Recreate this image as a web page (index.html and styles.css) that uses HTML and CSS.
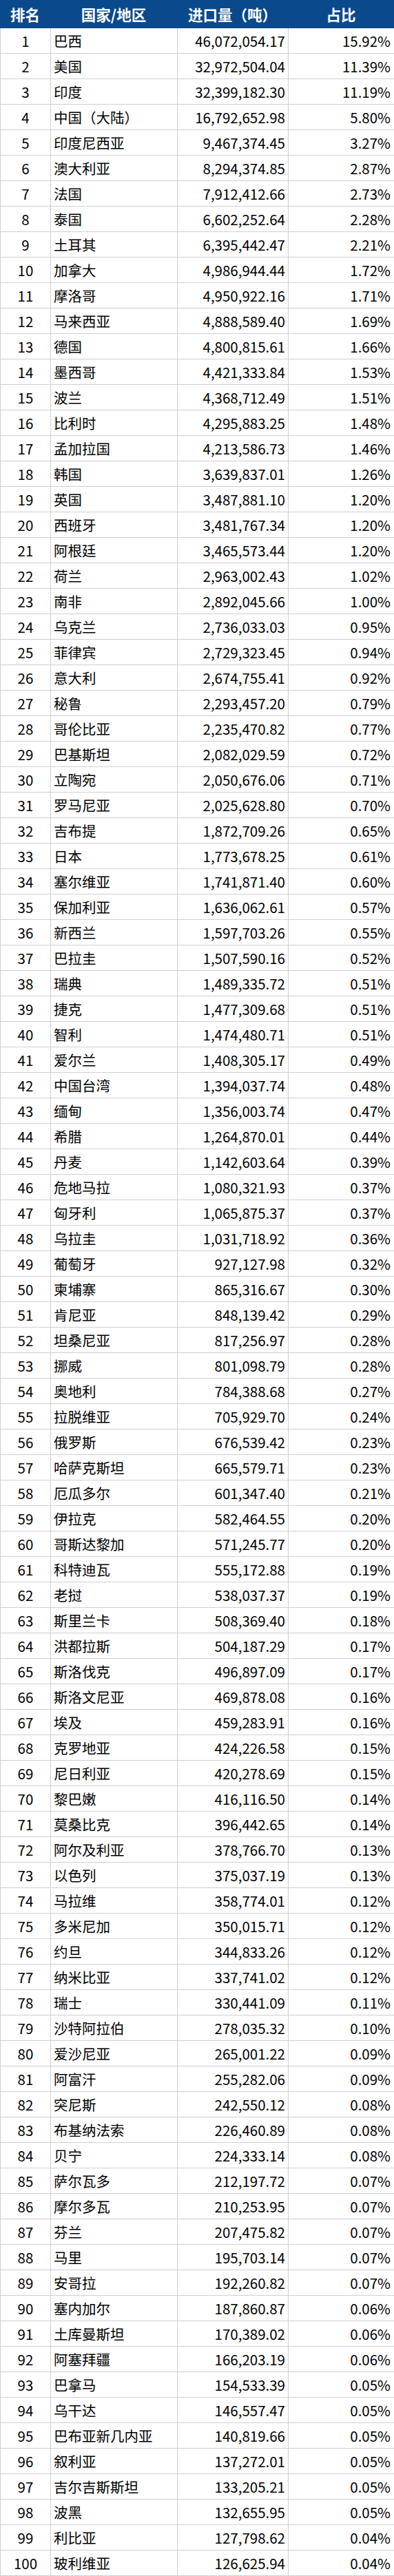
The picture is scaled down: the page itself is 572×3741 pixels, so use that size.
FILE: index.html
```html
<!DOCTYPE html>
<html lang="zh-CN">
<head>
<meta charset="utf-8">
<title>进口量排名</title>
<link rel="stylesheet" href="styles.css">
</head>
<body>
<div class="table" role="table">
  <div class="row head" role="row">
    <div class="cell c-rank" role="columnheader">排名</div>
    <div class="cell c-name" role="columnheader">国家/地区</div>
    <div class="cell c-qty" role="columnheader">进口量（吨）</div>
    <div class="cell c-pct" role="columnheader">占比</div>
  </div>
  <div class="row"><div class="cell c-rank">1</div><div class="cell c-name">巴西</div><div class="cell c-qty">46,072,054.17</div><div class="cell c-pct">15.92%</div></div>
  <div class="row"><div class="cell c-rank">2</div><div class="cell c-name">美国</div><div class="cell c-qty">32,972,504.04</div><div class="cell c-pct">11.39%</div></div>
  <div class="row"><div class="cell c-rank">3</div><div class="cell c-name">印度</div><div class="cell c-qty">32,399,182.30</div><div class="cell c-pct">11.19%</div></div>
  <div class="row"><div class="cell c-rank">4</div><div class="cell c-name">中国（大陆）</div><div class="cell c-qty">16,792,652.98</div><div class="cell c-pct">5.80%</div></div>
  <div class="row"><div class="cell c-rank">5</div><div class="cell c-name">印度尼西亚</div><div class="cell c-qty">9,467,374.45</div><div class="cell c-pct">3.27%</div></div>
  <div class="row"><div class="cell c-rank">6</div><div class="cell c-name">澳大利亚</div><div class="cell c-qty">8,294,374.85</div><div class="cell c-pct">2.87%</div></div>
  <div class="row"><div class="cell c-rank">7</div><div class="cell c-name">法国</div><div class="cell c-qty">7,912,412.66</div><div class="cell c-pct">2.73%</div></div>
  <div class="row"><div class="cell c-rank">8</div><div class="cell c-name">泰国</div><div class="cell c-qty">6,602,252.64</div><div class="cell c-pct">2.28%</div></div>
  <div class="row"><div class="cell c-rank">9</div><div class="cell c-name">土耳其</div><div class="cell c-qty">6,395,442.47</div><div class="cell c-pct">2.21%</div></div>
  <div class="row"><div class="cell c-rank">10</div><div class="cell c-name">加拿大</div><div class="cell c-qty">4,986,944.44</div><div class="cell c-pct">1.72%</div></div>
  <div class="row"><div class="cell c-rank">11</div><div class="cell c-name">摩洛哥</div><div class="cell c-qty">4,950,922.16</div><div class="cell c-pct">1.71%</div></div>
  <div class="row"><div class="cell c-rank">12</div><div class="cell c-name">马来西亚</div><div class="cell c-qty">4,888,589.40</div><div class="cell c-pct">1.69%</div></div>
  <div class="row"><div class="cell c-rank">13</div><div class="cell c-name">德国</div><div class="cell c-qty">4,800,815.61</div><div class="cell c-pct">1.66%</div></div>
  <div class="row"><div class="cell c-rank">14</div><div class="cell c-name">墨西哥</div><div class="cell c-qty">4,421,333.84</div><div class="cell c-pct">1.53%</div></div>
  <div class="row"><div class="cell c-rank">15</div><div class="cell c-name">波兰</div><div class="cell c-qty">4,368,712.49</div><div class="cell c-pct">1.51%</div></div>
  <div class="row"><div class="cell c-rank">16</div><div class="cell c-name">比利时</div><div class="cell c-qty">4,295,883.25</div><div class="cell c-pct">1.48%</div></div>
  <div class="row"><div class="cell c-rank">17</div><div class="cell c-name">孟加拉国</div><div class="cell c-qty">4,213,586.73</div><div class="cell c-pct">1.46%</div></div>
  <div class="row"><div class="cell c-rank">18</div><div class="cell c-name">韩国</div><div class="cell c-qty">3,639,837.01</div><div class="cell c-pct">1.26%</div></div>
  <div class="row"><div class="cell c-rank">19</div><div class="cell c-name">英国</div><div class="cell c-qty">3,487,881.10</div><div class="cell c-pct">1.20%</div></div>
  <div class="row"><div class="cell c-rank">20</div><div class="cell c-name">西班牙</div><div class="cell c-qty">3,481,767.34</div><div class="cell c-pct">1.20%</div></div>
  <div class="row"><div class="cell c-rank">21</div><div class="cell c-name">阿根廷</div><div class="cell c-qty">3,465,573.44</div><div class="cell c-pct">1.20%</div></div>
  <div class="row"><div class="cell c-rank">22</div><div class="cell c-name">荷兰</div><div class="cell c-qty">2,963,002.43</div><div class="cell c-pct">1.02%</div></div>
  <div class="row"><div class="cell c-rank">23</div><div class="cell c-name">南非</div><div class="cell c-qty">2,892,045.66</div><div class="cell c-pct">1.00%</div></div>
  <div class="row"><div class="cell c-rank">24</div><div class="cell c-name">乌克兰</div><div class="cell c-qty">2,736,033.03</div><div class="cell c-pct">0.95%</div></div>
  <div class="row"><div class="cell c-rank">25</div><div class="cell c-name">菲律宾</div><div class="cell c-qty">2,729,323.45</div><div class="cell c-pct">0.94%</div></div>
  <div class="row"><div class="cell c-rank">26</div><div class="cell c-name">意大利</div><div class="cell c-qty">2,674,755.41</div><div class="cell c-pct">0.92%</div></div>
  <div class="row"><div class="cell c-rank">27</div><div class="cell c-name">秘鲁</div><div class="cell c-qty">2,293,457.20</div><div class="cell c-pct">0.79%</div></div>
  <div class="row"><div class="cell c-rank">28</div><div class="cell c-name">哥伦比亚</div><div class="cell c-qty">2,235,470.82</div><div class="cell c-pct">0.77%</div></div>
  <div class="row"><div class="cell c-rank">29</div><div class="cell c-name">巴基斯坦</div><div class="cell c-qty">2,082,029.59</div><div class="cell c-pct">0.72%</div></div>
  <div class="row"><div class="cell c-rank">30</div><div class="cell c-name">立陶宛</div><div class="cell c-qty">2,050,676.06</div><div class="cell c-pct">0.71%</div></div>
  <div class="row"><div class="cell c-rank">31</div><div class="cell c-name">罗马尼亚</div><div class="cell c-qty">2,025,628.80</div><div class="cell c-pct">0.70%</div></div>
  <div class="row"><div class="cell c-rank">32</div><div class="cell c-name">吉布提</div><div class="cell c-qty">1,872,709.26</div><div class="cell c-pct">0.65%</div></div>
  <div class="row"><div class="cell c-rank">33</div><div class="cell c-name">日本</div><div class="cell c-qty">1,773,678.25</div><div class="cell c-pct">0.61%</div></div>
  <div class="row"><div class="cell c-rank">34</div><div class="cell c-name">塞尔维亚</div><div class="cell c-qty">1,741,871.40</div><div class="cell c-pct">0.60%</div></div>
  <div class="row"><div class="cell c-rank">35</div><div class="cell c-name">保加利亚</div><div class="cell c-qty">1,636,062.61</div><div class="cell c-pct">0.57%</div></div>
  <div class="row"><div class="cell c-rank">36</div><div class="cell c-name">新西兰</div><div class="cell c-qty">1,597,703.26</div><div class="cell c-pct">0.55%</div></div>
  <div class="row"><div class="cell c-rank">37</div><div class="cell c-name">巴拉圭</div><div class="cell c-qty">1,507,590.16</div><div class="cell c-pct">0.52%</div></div>
  <div class="row"><div class="cell c-rank">38</div><div class="cell c-name">瑞典</div><div class="cell c-qty">1,489,335.72</div><div class="cell c-pct">0.51%</div></div>
  <div class="row"><div class="cell c-rank">39</div><div class="cell c-name">捷克</div><div class="cell c-qty">1,477,309.68</div><div class="cell c-pct">0.51%</div></div>
  <div class="row"><div class="cell c-rank">40</div><div class="cell c-name">智利</div><div class="cell c-qty">1,474,480.71</div><div class="cell c-pct">0.51%</div></div>
  <div class="row"><div class="cell c-rank">41</div><div class="cell c-name">爱尔兰</div><div class="cell c-qty">1,408,305.17</div><div class="cell c-pct">0.49%</div></div>
  <div class="row"><div class="cell c-rank">42</div><div class="cell c-name">中国台湾</div><div class="cell c-qty">1,394,037.74</div><div class="cell c-pct">0.48%</div></div>
  <div class="row"><div class="cell c-rank">43</div><div class="cell c-name">缅甸</div><div class="cell c-qty">1,356,003.74</div><div class="cell c-pct">0.47%</div></div>
  <div class="row"><div class="cell c-rank">44</div><div class="cell c-name">希腊</div><div class="cell c-qty">1,264,870.01</div><div class="cell c-pct">0.44%</div></div>
  <div class="row"><div class="cell c-rank">45</div><div class="cell c-name">丹麦</div><div class="cell c-qty">1,142,603.64</div><div class="cell c-pct">0.39%</div></div>
  <div class="row"><div class="cell c-rank">46</div><div class="cell c-name">危地马拉</div><div class="cell c-qty">1,080,321.93</div><div class="cell c-pct">0.37%</div></div>
  <div class="row"><div class="cell c-rank">47</div><div class="cell c-name">匈牙利</div><div class="cell c-qty">1,065,875.37</div><div class="cell c-pct">0.37%</div></div>
  <div class="row"><div class="cell c-rank">48</div><div class="cell c-name">乌拉圭</div><div class="cell c-qty">1,031,718.92</div><div class="cell c-pct">0.36%</div></div>
  <div class="row"><div class="cell c-rank">49</div><div class="cell c-name">葡萄牙</div><div class="cell c-qty">927,127.98</div><div class="cell c-pct">0.32%</div></div>
  <div class="row"><div class="cell c-rank">50</div><div class="cell c-name">柬埔寨</div><div class="cell c-qty">865,316.67</div><div class="cell c-pct">0.30%</div></div>
  <div class="row"><div class="cell c-rank">51</div><div class="cell c-name">肯尼亚</div><div class="cell c-qty">848,139.42</div><div class="cell c-pct">0.29%</div></div>
  <div class="row"><div class="cell c-rank">52</div><div class="cell c-name">坦桑尼亚</div><div class="cell c-qty">817,256.97</div><div class="cell c-pct">0.28%</div></div>
  <div class="row"><div class="cell c-rank">53</div><div class="cell c-name">挪威</div><div class="cell c-qty">801,098.79</div><div class="cell c-pct">0.28%</div></div>
  <div class="row"><div class="cell c-rank">54</div><div class="cell c-name">奥地利</div><div class="cell c-qty">784,388.68</div><div class="cell c-pct">0.27%</div></div>
  <div class="row"><div class="cell c-rank">55</div><div class="cell c-name">拉脱维亚</div><div class="cell c-qty">705,929.70</div><div class="cell c-pct">0.24%</div></div>
  <div class="row"><div class="cell c-rank">56</div><div class="cell c-name">俄罗斯</div><div class="cell c-qty">676,539.42</div><div class="cell c-pct">0.23%</div></div>
  <div class="row"><div class="cell c-rank">57</div><div class="cell c-name">哈萨克斯坦</div><div class="cell c-qty">665,579.71</div><div class="cell c-pct">0.23%</div></div>
  <div class="row"><div class="cell c-rank">58</div><div class="cell c-name">厄瓜多尔</div><div class="cell c-qty">601,347.40</div><div class="cell c-pct">0.21%</div></div>
  <div class="row"><div class="cell c-rank">59</div><div class="cell c-name">伊拉克</div><div class="cell c-qty">582,464.55</div><div class="cell c-pct">0.20%</div></div>
  <div class="row"><div class="cell c-rank">60</div><div class="cell c-name">哥斯达黎加</div><div class="cell c-qty">571,245.77</div><div class="cell c-pct">0.20%</div></div>
  <div class="row"><div class="cell c-rank">61</div><div class="cell c-name">科特迪瓦</div><div class="cell c-qty">555,172.88</div><div class="cell c-pct">0.19%</div></div>
  <div class="row"><div class="cell c-rank">62</div><div class="cell c-name">老挝</div><div class="cell c-qty">538,037.37</div><div class="cell c-pct">0.19%</div></div>
  <div class="row"><div class="cell c-rank">63</div><div class="cell c-name">斯里兰卡</div><div class="cell c-qty">508,369.40</div><div class="cell c-pct">0.18%</div></div>
  <div class="row"><div class="cell c-rank">64</div><div class="cell c-name">洪都拉斯</div><div class="cell c-qty">504,187.29</div><div class="cell c-pct">0.17%</div></div>
  <div class="row"><div class="cell c-rank">65</div><div class="cell c-name">斯洛伐克</div><div class="cell c-qty">496,897.09</div><div class="cell c-pct">0.17%</div></div>
  <div class="row"><div class="cell c-rank">66</div><div class="cell c-name">斯洛文尼亚</div><div class="cell c-qty">469,878.08</div><div class="cell c-pct">0.16%</div></div>
  <div class="row"><div class="cell c-rank">67</div><div class="cell c-name">埃及</div><div class="cell c-qty">459,283.91</div><div class="cell c-pct">0.16%</div></div>
  <div class="row"><div class="cell c-rank">68</div><div class="cell c-name">克罗地亚</div><div class="cell c-qty">424,226.58</div><div class="cell c-pct">0.15%</div></div>
  <div class="row"><div class="cell c-rank">69</div><div class="cell c-name">尼日利亚</div><div class="cell c-qty">420,278.69</div><div class="cell c-pct">0.15%</div></div>
  <div class="row"><div class="cell c-rank">70</div><div class="cell c-name">黎巴嫩</div><div class="cell c-qty">416,116.50</div><div class="cell c-pct">0.14%</div></div>
  <div class="row"><div class="cell c-rank">71</div><div class="cell c-name">莫桑比克</div><div class="cell c-qty">396,442.65</div><div class="cell c-pct">0.14%</div></div>
  <div class="row"><div class="cell c-rank">72</div><div class="cell c-name">阿尔及利亚</div><div class="cell c-qty">378,766.70</div><div class="cell c-pct">0.13%</div></div>
  <div class="row"><div class="cell c-rank">73</div><div class="cell c-name">以色列</div><div class="cell c-qty">375,037.19</div><div class="cell c-pct">0.13%</div></div>
  <div class="row"><div class="cell c-rank">74</div><div class="cell c-name">马拉维</div><div class="cell c-qty">358,774.01</div><div class="cell c-pct">0.12%</div></div>
  <div class="row"><div class="cell c-rank">75</div><div class="cell c-name">多米尼加</div><div class="cell c-qty">350,015.71</div><div class="cell c-pct">0.12%</div></div>
  <div class="row"><div class="cell c-rank">76</div><div class="cell c-name">约旦</div><div class="cell c-qty">344,833.26</div><div class="cell c-pct">0.12%</div></div>
  <div class="row"><div class="cell c-rank">77</div><div class="cell c-name">纳米比亚</div><div class="cell c-qty">337,741.02</div><div class="cell c-pct">0.12%</div></div>
  <div class="row"><div class="cell c-rank">78</div><div class="cell c-name">瑞士</div><div class="cell c-qty">330,441.09</div><div class="cell c-pct">0.11%</div></div>
  <div class="row"><div class="cell c-rank">79</div><div class="cell c-name">沙特阿拉伯</div><div class="cell c-qty">278,035.32</div><div class="cell c-pct">0.10%</div></div>
  <div class="row"><div class="cell c-rank">80</div><div class="cell c-name">爱沙尼亚</div><div class="cell c-qty">265,001.22</div><div class="cell c-pct">0.09%</div></div>
  <div class="row"><div class="cell c-rank">81</div><div class="cell c-name">阿富汗</div><div class="cell c-qty">255,282.06</div><div class="cell c-pct">0.09%</div></div>
  <div class="row"><div class="cell c-rank">82</div><div class="cell c-name">突尼斯</div><div class="cell c-qty">242,550.12</div><div class="cell c-pct">0.08%</div></div>
  <div class="row"><div class="cell c-rank">83</div><div class="cell c-name">布基纳法索</div><div class="cell c-qty">226,460.89</div><div class="cell c-pct">0.08%</div></div>
  <div class="row"><div class="cell c-rank">84</div><div class="cell c-name">贝宁</div><div class="cell c-qty">224,333.14</div><div class="cell c-pct">0.08%</div></div>
  <div class="row"><div class="cell c-rank">85</div><div class="cell c-name">萨尔瓦多</div><div class="cell c-qty">212,197.72</div><div class="cell c-pct">0.07%</div></div>
  <div class="row"><div class="cell c-rank">86</div><div class="cell c-name">摩尔多瓦</div><div class="cell c-qty">210,253.95</div><div class="cell c-pct">0.07%</div></div>
  <div class="row"><div class="cell c-rank">87</div><div class="cell c-name">芬兰</div><div class="cell c-qty">207,475.82</div><div class="cell c-pct">0.07%</div></div>
  <div class="row"><div class="cell c-rank">88</div><div class="cell c-name">马里</div><div class="cell c-qty">195,703.14</div><div class="cell c-pct">0.07%</div></div>
  <div class="row"><div class="cell c-rank">89</div><div class="cell c-name">安哥拉</div><div class="cell c-qty">192,260.82</div><div class="cell c-pct">0.07%</div></div>
  <div class="row"><div class="cell c-rank">90</div><div class="cell c-name">塞内加尔</div><div class="cell c-qty">187,860.87</div><div class="cell c-pct">0.06%</div></div>
  <div class="row"><div class="cell c-rank">91</div><div class="cell c-name">土库曼斯坦</div><div class="cell c-qty">170,389.02</div><div class="cell c-pct">0.06%</div></div>
  <div class="row"><div class="cell c-rank">92</div><div class="cell c-name">阿塞拜疆</div><div class="cell c-qty">166,203.19</div><div class="cell c-pct">0.06%</div></div>
  <div class="row"><div class="cell c-rank">93</div><div class="cell c-name">巴拿马</div><div class="cell c-qty">154,533.39</div><div class="cell c-pct">0.05%</div></div>
  <div class="row"><div class="cell c-rank">94</div><div class="cell c-name">乌干达</div><div class="cell c-qty">146,557.47</div><div class="cell c-pct">0.05%</div></div>
  <div class="row"><div class="cell c-rank">95</div><div class="cell c-name">巴布亚新几内亚</div><div class="cell c-qty">140,819.66</div><div class="cell c-pct">0.05%</div></div>
  <div class="row"><div class="cell c-rank">96</div><div class="cell c-name">叙利亚</div><div class="cell c-qty">137,272.01</div><div class="cell c-pct">0.05%</div></div>
  <div class="row"><div class="cell c-rank">97</div><div class="cell c-name">吉尔吉斯斯坦</div><div class="cell c-qty">133,205.21</div><div class="cell c-pct">0.05%</div></div>
  <div class="row"><div class="cell c-rank">98</div><div class="cell c-name">波黑</div><div class="cell c-qty">132,655.95</div><div class="cell c-pct">0.05%</div></div>
  <div class="row"><div class="cell c-rank">99</div><div class="cell c-name">利比亚</div><div class="cell c-qty">127,798.62</div><div class="cell c-pct">0.04%</div></div>
  <div class="row"><div class="cell c-rank">100</div><div class="cell c-name">玻利维亚</div><div class="cell c-qty">126,625.94</div><div class="cell c-pct">0.04%</div></div>
</div>
</body>
</html>
```

FILE: styles.css
```css
html, body {
  margin: 0;
  padding: 0;
  background: #ffffff;
}

body {
  font-family: "Noto Sans CJK SC", "Noto Sans", sans-serif;
  color: #000000;
}

.table {
  width: 572px;
}

.row {
  display: grid;
  grid-template-columns: 73px 184px 161px 154px;
  height: 37px;
  box-sizing: border-box;
  border-bottom: 1px solid #d0d0d0;
  font-size: 20.5px;
}

.cell {
  display: flex;
  align-items: center;
  border-left: 1px solid #d0d0d0;
  box-sizing: border-box;
  white-space: nowrap;
  line-height: 1;
}

.c-rank {
  justify-content: center;
}

.c-name {
  justify-content: flex-start;
  padding-left: 4px;
}

.c-qty {
  justify-content: flex-end;
  padding-right: 4px;
}

.c-pct {
  justify-content: flex-end;
  padding-right: 5px;
}

.head {
  height: 41px;
  background: #0a4a8c;
  border-bottom: none;
  color: #ffffff;
  font-weight: 700;
  font-size: 21.5px;
}

.head .cell {
  justify-content: center;
  border-left: none;
  padding: 0;
}
```
